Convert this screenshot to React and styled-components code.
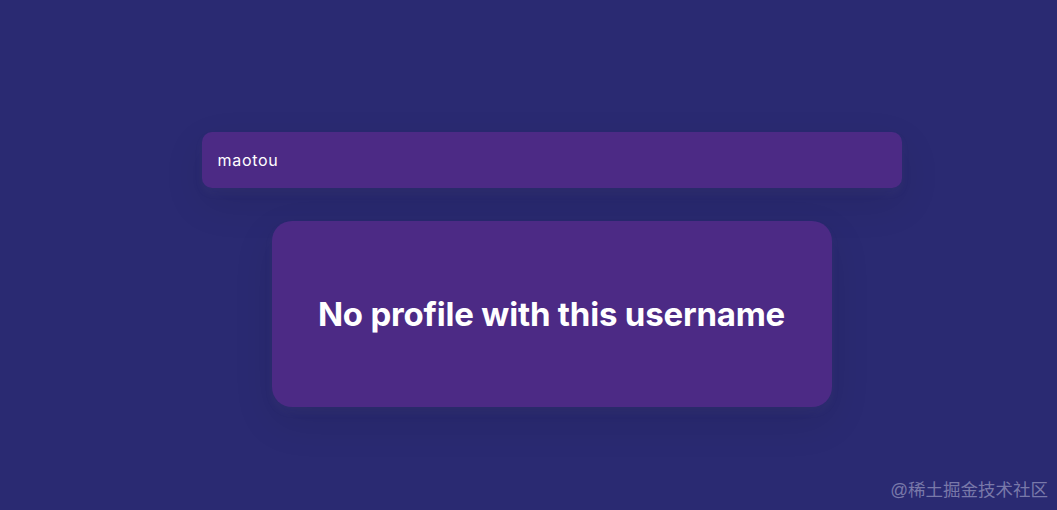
import styled, { createGlobalStyle } from 'styled-components';

const Global = createGlobalStyle`
  * { box-sizing: border-box; }
  html, body {
    margin: 0;
    height: 100%;
    background: #2a2a72;
    font-family: Inter, 'Open Sans', 'Noto Sans', sans-serif;
    overflow: hidden;
  }
`;

const Page = styled.main`
  height: 510px;
  display: flex;
  flex-direction: column;
  align-items: center;
  padding: 132px 0 0 46px;
  position: relative;
`;

const Form = styled.form`
  width: 700px;
  margin-bottom: 33px;
`;

const Search = styled.input`
  width: 100%;
  height: 56px;
  display: block;
  border: 0;
  border-radius: 10px;
  background: #4c2a85;
  color: #fff;
  font-family: inherit;
  font-size: 16px;
  font-weight: 400;
  letter-spacing: 0.7px;
  padding: 0 16px;
  outline: none;
  box-shadow: 0 5px 10px rgba(154, 160, 185, 0.05),
    0 15px 40px rgba(0, 0, 0, 0.1);
  &::placeholder { color: #bbb; }
`;

const Card = styled.div`
  width: 560px;
  height: 186px;
  border-radius: 20px;
  background: #4c2a85;
  box-shadow: 0 5px 10px rgba(154, 160, 185, 0.05), 0 15px 40px rgba(0, 0, 0, 0.1);
  display: flex;
  align-items: center;
  justify-content: center;
`;

const Message = styled.h1`
  margin: 0;
  color: #fff;
  font-size: 33px;
  font-weight: 650;
  letter-spacing: -0.2px;
`;

const Watermark = styled.span`
  position: absolute;
  right: 9px;
  bottom: 9px;
  color: rgba(200, 200, 225, 0.5);
  font-family: 'Liberation Sans', 'Noto Sans CJK SC', sans-serif;
  font-size: 17.5px;
`;

export default function App() {
  return (
    <>
      <Global />
      <Page>
        <Form onSubmit={(e) => e.preventDefault()}>
          <Search type="text" defaultValue="maotou" placeholder="Search a Github User" />
        </Form>
        <Card>
          <Message>No profile with this username</Message>
        </Card>
        <Watermark>@稀土掘金技术社区</Watermark>
      </Page>
    </>
  );
}
